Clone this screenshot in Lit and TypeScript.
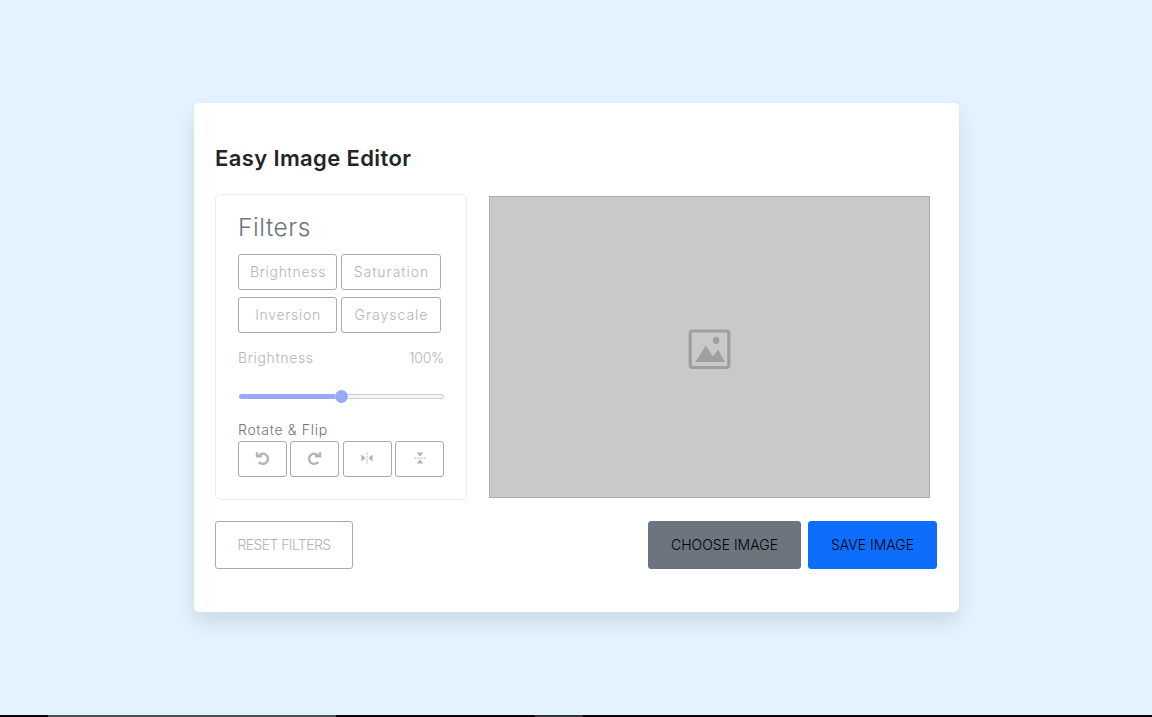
import { LitElement, html, css, svg } from "lit";
import { customElement } from "lit/decorators.js";

const undo = svg`<path d="M4.2 4.2A5.1 5.1 0 1 1 3.8 11" fill="none" stroke="#b3b3b3" stroke-width="2.3"/><path d="M.8 1.2h2.2v2.6H6.8v2.6H.8z" fill="#b3b3b3"/>`;

@customElement("app-root")
export class AppRoot extends LitElement {
  static styles = css`
    :host { display: block; font-family: Inter, "Open Sans", sans-serif; font-weight: 300; }
    * { box-sizing: border-box; }
    .page { height: 717px; background: #e3f2fd; display: flex; flex-direction: column; overflow: hidden; }
    .stage { flex: 1; padding: 103px 193px 0 194px; }
    .card { height: 509px; background: #fff; border-radius: 5px; padding: 39px 22px 0 21px; box-shadow: 0 10px 20px rgba(0, 0, 0, .1); }
    h2 { margin: 0; height: 33px; line-height: 33px; font-size: 22px; font-weight: 580; color: #212529; letter-spacing: .38px; white-space: nowrap; }
    .work { display: flex; margin-top: 19px; height: 306px; }
    .filters { width: 252px; border: 1px solid #ececec; border-radius: 5px; padding: 17px 22px 0; color: #6c757d; }
    h3 { margin: 0; height: 30px; line-height: 30px; font-size: 24.5px; font-weight: 300; letter-spacing: .55px; }
    .options { display: grid; grid-template-columns: 99px 100px; gap: 7px 4px; margin-top: 12px; }
    button { font: inherit; font-size: 14px; padding: 0 0 2px; margin: 0; background: #fff; color: #b3b3b3; border: 1px solid #a6abb0; border-radius: 3px; height: 36px; display: flex; align-items: center; justify-content: center; white-space: nowrap; }
    .options button { letter-spacing: .7px; padding-left: 1px; }
    .options button:nth-child(2) { letter-spacing: 1px; }
    .options button:nth-child(4) { letter-spacing: 1px; }
    .info { display: flex; justify-content: space-between; margin-top: 14px; height: 21px; line-height: 21px; font-size: 14px; color: #b3b3b3; width: 206px; letter-spacing: .65px; }
    .value { letter-spacing: -.2px; }
    .slider { display: flex; align-items: center; width: 205px; height: 14px; margin: 21px 0 0 1px; }
    .done { width: 96px; height: 5px; background: #98a9f5; border-radius: 3px 0 0 3px; }
    .thumb { width: 13px; height: 13px; border-radius: 50%; background: #98a9f5; }
    .rest { flex: 1; height: 5px; border: 1px solid #cecece; border-left: 0; border-radius: 0 3px 3px 0; background: #f5f5f5; }
    .label { margin-top: 16px; height: 21px; line-height: 21px; font-size: 14px; letter-spacing: .68px; }
    .turns { display: grid; grid-template-columns: 49px 49px 49px 49px; column-gap: 3.35px; margin-top: 1px; }
    .preview { margin: 2px 0 0 22px; width: 441px; height: 302px; background: #c9c9c9; border: 1px solid #adadad; display: flex; align-items: center; justify-content: center; }
    .preview svg { margin-top: 4px; }
    svg { display: block; }
    .controls { display: flex; margin-top: 21px; gap: 7px; }
    .controls button { height: 48px; }
    .controls .reset { width: 138px; margin-right: auto; letter-spacing: -.6px; }
    .controls .choose { width: 153px; background: #6c757d; border-color: #6c757d; color: #000; }
    .controls .save { width: 129px; background: #0d6efd; border-color: #0d6efd; color: #000; }
    .bar { height: 2px; background: #0b0509; display: flex; }
    .task { margin-left: 48px; width: 288px; background: #504c4e; }
    .task2 { margin-left: 199px; width: 48px; background: #373337; }
  `;

  render() {
    return html`<div class="page">
      <main class="stage"><section class="card">
        <h2>Easy Image Editor</h2>
        <div class="work">
          <div class="filters">
            <h3>Filters</h3>
            <div class="options">
              ${["Brightness", "Saturation", "Inversion", "Grayscale"].map((n) => html`<button>${n}</button>`)}
            </div>
            <div class="info"><span>Brightness</span><span class="value">100%</span></div>
            <div class="slider"><div class="done"></div><div class="thumb"></div><div class="rest"></div></div>
            <div class="label">Rotate &amp; Flip</div>
            <div class="turns">
              <button><svg width="15" height="15" viewBox="0 0 15 15">${undo}</svg></button>
              <button><svg width="15" height="15" viewBox="0 0 15 15"><g transform="matrix(-1 0 0 1 15 0)">${undo}</g></svg></button>
              <button><svg width="12" height="12" viewBox="0 0 12 12" fill="#b3b3b3"><path d="M.4 2.6 4.5 6 .4 9.4zM11.6 2.6 7.5 6l4.1 3.4z"/><path d="M6 .5v11" stroke="#b3b3b3" stroke-dasharray="2 1"/></svg></button>
              <button><svg width="12" height="12" viewBox="0 0 12 12" fill="#b3b3b3"><path d="M2.6 .4 6 4.5 9.4 .4zM2.6 11.6 6 7.5l3.4 4.1z"/><path d="M.5 6h11" stroke="#b3b3b3" stroke-dasharray="2 1"/></svg></button>
            </div>
          </div>
          <div class="preview">
            <svg width="44" height="42" viewBox="0 0 44 42"><rect x="2.2" y="3" width="38.6" height="36.5" rx="2.5" fill="none" stroke="#9f9f9f" stroke-width="3.2"/><ellipse cx="28.2" cy="12.3" rx="3.2" ry="3.6" fill="#9f9f9f"/><path d="M7.5 34 17.8 17.5 25 28.5 30 21.5 37 34z" fill="#9f9f9f"/></svg>
          </div>
        </div>
        <div class="controls">
          <button class="reset">RESET FILTERS</button>
          <button class="choose">CHOOSE IMAGE</button>
          <button class="save">SAVE IMAGE</button>
        </div>
      </section></main>
      <div class="bar"><div class="task"></div><div class="task2"></div></div>
    </div>`;
  }
}
